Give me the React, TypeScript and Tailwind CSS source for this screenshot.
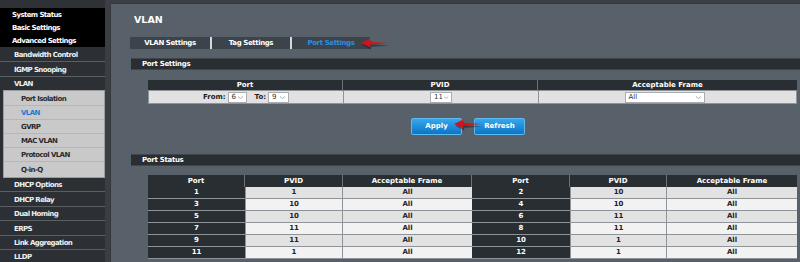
const font = "font-['DejaVu_Sans',Verdana,sans-serif]";

function Chevron() {
  return (
    <svg width="7" height="5" viewBox="0 0 7 5" className="ml-auto">
      <path d="M1 1.5 L3.5 3.5 L6 1.5" fill="none" stroke="#9aa0a6" strokeWidth="0.9" />
    </svg>
  );
}

function Select({ value, w }: { value: string; w: string }) {
  return (
    <div className={`flex h-[11px] items-center border border-[#a9adb1] bg-white pl-[3px] pr-[2px] text-[7px] font-normal text-[#333] ${w}`}>
      <span>{value}</span>
      <Chevron />
    </div>
  );
}

function Arrow({ className }: { className: string }) {
  return (
    <svg width="30" height="14" viewBox="0 0 30 14" className={`absolute ${className}`}>
      <path d="M28 7 L10 5.6 L10 2 L1 6.5 L10 11 L10 8.4 Z" fill="#000" opacity="0.35" transform="translate(1.2,1.5)" />
      <path d="M28 6 L10 4.8 L10 1.5 L1 6 L10 10.5 L10 7.6 Z" fill="#d0141c" />
    </svg>
  );
}

const sideTop = ["System Status", "Basic Settings", "Advanced Settings"];
const sideMid = ["Bandwidth Control", "IGMP Snooping"];
const sideSub = ["Port Isolation", "VLAN", "GVRP", "MAC VLAN", "Protocol VLAN", "Q-in-Q"];
const sideBot = ["DHCP Options", "DHCP Relay", "Dual Homing", "ERPS", "Link Aggregation", "LLDP"];

const status = [
  [1, 1, 2, 10],
  [3, 10, 4, 10],
  [5, 10, 6, 11],
  [7, 11, 8, 11],
  [9, 11, 10, 1],
  [11, 1, 12, 1],
];

function Sidebar() {
  return (
    <div className="flex w-[105px] shrink-0 flex-col bg-[#2c3034] tracking-[-0.6px]">
      <div className="h-[8px] shrink-0 bg-[#2e3236]" />
      <div className="flex flex-col bg-black">
        {sideTop.map((t) => (
          <div key={t} className="flex h-[13px] items-center pl-[12px] pt-[2px] text-[7px] font-bold text-white">{t}</div>
        ))}
      </div>
      {sideMid.map((t) => (
        <div key={t} className="flex h-[15px] shrink-0 items-center border-b border-[#5a5f64] pl-[14px] pt-[2px] text-[7px] font-bold text-[#f0f0f0]">{t}</div>
      ))}
      <div className="flex h-[13px] shrink-0 items-center pl-[14px] pt-[2px] text-[7px] font-bold text-[#f0f0f0]">VLAN</div>
      <div className="ml-[3px] flex shrink-0 flex-col border border-[#9a9ea2] bg-[#c9c9c9] py-[1px]">
        {sideSub.map((t) => (
          <div key={t} className={`flex h-[14px] items-center border-b border-[#b4b6b8] pl-[17px] pt-[2px] text-[7px] font-bold last:border-b-0 ${t === "VLAN" ? "text-[#1f78d1]" : "text-[#2a2a2a]"}`}>{t}</div>
        ))}
      </div>
      {sideBot.map((t) => (
        <div key={t} className="flex h-[14.4px] shrink-0 items-center border-b border-[#5a5f64] pl-[14px] pt-[2px] text-[7px] font-bold text-[#f0f0f0]">{t}</div>
      ))}
    </div>
  );
}

function SectionBar({ title }: { title: string }) {
  return (
    <div className="flex h-[12px] items-center border-y border-[#3f454b] bg-[#292e32] pl-[11px] text-[7px] font-bold tracking-[-0.3px] text-white">{title}</div>
  );
}

function Main() {
  return (
    <div className="relative flex flex-1 flex-col overflow-hidden border-l border-t border-[#33383d] bg-[#58616a] pl-[19px]">
      <div className="pl-[4px] pt-[9px] text-[9.5px] font-bold leading-[13px] text-white">VLAN</div>
      <div className="mt-[11px] flex h-[12px] items-stretch text-[7px] font-bold tracking-[-0.4px]">
        <div className="flex w-[80px] items-center justify-center bg-[#3c434a] text-white">VLAN Settings</div>
        <div className="w-[2px] bg-[#d6d9dc]" />
        <div className="flex w-[78px] items-center justify-center bg-[#3c434a] text-white">Tag Settings</div>
        <div className="w-[2px] bg-[#d6d9dc]" />
        <div className="flex w-[78px] items-center justify-center bg-[#3c434a] text-[#2a8fe0]">Port Settings</div>
      </div>
      <Arrow className="left-[249px] top-[33px]" />

      <div className="mt-[9px] ml-px">
        <SectionBar title="Port Settings" />
      </div>

      <div className="ml-[18px] mr-[3px] mt-[10px] text-[7px] font-bold">
        <div className="grid h-[10px] grid-cols-[195px_195px_1fr] bg-[#292e32] text-white">
          <div className="flex items-center justify-center border-r border-[#6b7279]">Port</div>
          <div className="flex items-center justify-center border-r border-[#6b7279]">PVID</div>
          <div className="flex items-center justify-center">Acceptable Frame</div>
        </div>
        <div className="grid h-[14px] grid-cols-[195px_195px_1fr] border border-[#8e9499] bg-[#e1e1e1] text-[#222]">
          <div className="flex items-center justify-center border-r border-[#8e9499]">
            <span className="mr-[2px]">From:</span>
            <Select value="6" w="w-[19px]" />
            <span className="ml-[8px] mr-[2px]">To:</span>
            <Select value="9" w="w-[21px]" />
          </div>
          <div className="flex items-center justify-center border-r border-[#8e9499]">
            <Select value="11" w="w-[22px]" />
          </div>
          <div className="flex items-center justify-center pr-[6px]">
            <Select value="All" w="w-[80px]" />
          </div>
        </div>
      </div>

      <div className="ml-[281px] mt-[14px] flex gap-[12px] text-[7px] font-bold text-white">
        <button className="h-[17px] w-[51px] rounded-[2px] border border-[#5cbaf0] bg-gradient-to-b from-[#35a8ee] to-[#0b74c4]">Apply</button>
        <button className="h-[17px] w-[51px] rounded-[2px] border border-[#5cbaf0] bg-gradient-to-b from-[#35a8ee] to-[#0b74c4]">Refresh</button>
      </div>
      <Arrow className="left-[342px] top-[114px]" />

      <div className="mt-[19px] ml-px">
        <SectionBar title="Port Status" />
      </div>

      <div className="ml-[18px] mr-[3px] mt-[9px] text-[7px] font-bold">
        <div className="grid h-[12px] grid-cols-[97px_98px_129px_98px_97px_1fr] bg-[#292e32] text-white">
          {["Port", "PVID", "Acceptable Frame", "Port", "PVID", "Acceptable Frame"].map((h, i) => (
            <div key={i} className="flex items-center justify-center border-r border-[#6b7279] last:border-r-0">{h}</div>
          ))}
        </div>
        {status.map((r, i) => (
          <div key={i} className="grid h-[12px] grid-cols-[97px_98px_129px_98px_97px_1fr] border-b border-[#8e9499]">
            <div className="flex items-center justify-center bg-[#292e32] text-white">{r[0]}</div>
            <div className={`flex items-center justify-center border-x border-[#8e9499] text-[#222] ${i % 2 ? "bg-[#f2f2f2]" : "bg-[#e2e2e2]"}`}>{r[1]}</div>
            <div className={`flex items-center justify-center text-[#222] ${i % 2 ? "bg-[#f2f2f2]" : "bg-[#e2e2e2]"}`}>All</div>
            <div className="flex items-center justify-center bg-[#292e32] text-white">{r[2]}</div>
            <div className={`flex items-center justify-center border-x border-[#8e9499] text-[#222] ${i % 2 ? "bg-[#f2f2f2]" : "bg-[#e2e2e2]"}`}>{r[3]}</div>
            <div className={`flex items-center justify-center text-[#222] ${i % 2 ? "bg-[#f2f2f2]" : "bg-[#e2e2e2]"}`}>All</div>
          </div>
        ))}
      </div>
    </div>
  );
}

export default function App() {
  return (
    <div className={`flex h-[262px] w-[800px] overflow-hidden bg-[#3b3f44] ${font}`}>
      <Sidebar />
      <div className="ml-[5px] mt-[3px] flex flex-1">
        <Main />
      </div>
    </div>
  );
}
